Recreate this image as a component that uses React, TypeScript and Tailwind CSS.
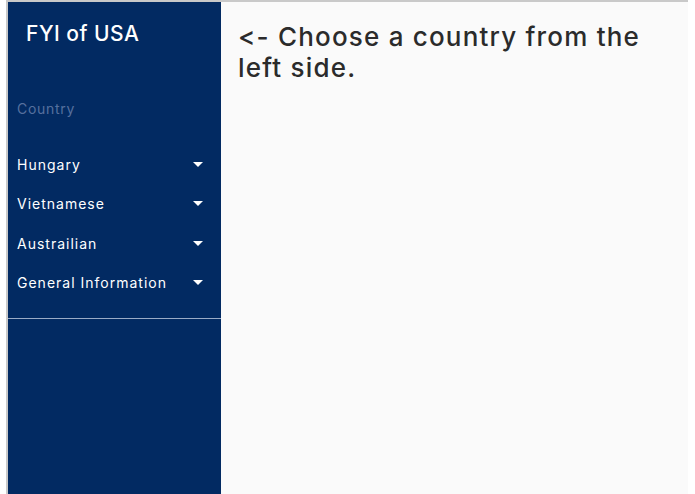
const countries = ['Hungary', 'Vietnamese', 'Austrailian', 'General Information'];

const Caret = () => (
  <svg width="10" height="5" viewBox="0 0 10 5" className="shrink-0">
    <path d="M0 0 L10 0 L5 5 Z" fill="#ffffff" />
  </svg>
);

const App = () => {
  return (
    <div
      className="w-[695px] h-[494px] bg-white pl-[6px] pr-[7px] overflow-hidden [font-feature-settings:'calt'_0,'liga'_0]"
      style={{ fontFamily: 'Inter, "Open Sans", sans-serif' }}
    >
      <div className="flex h-full border-t-2 border-l-2 border-[#c9c9c9]">
        <aside className="w-[213px] shrink-0 bg-[#022a62] flex flex-col">
          <h1 className="pl-[18px] pt-[18px] text-[21px] leading-[28px] font-medium tracking-[0.5px] text-white">
            FYI of USA
          </h1>
          <p className="pl-[9px] mt-[51px] text-[14px] leading-[20px] tracking-[0.7px] text-[#56709e]">
            Country
          </p>
          <ul className="mt-[26px] pb-[16px] border-b border-[#9aabc6]">
            {countries.map((name) => (
              <li
                key={name}
                className="flex items-center justify-between h-[39.3px] pl-[9px] pr-[18px] text-[14px] tracking-[1px] text-white"
              >
                <span>{name}</span>
                <Caret />
              </li>
            ))}
          </ul>
        </aside>
        <main className="flex-1 bg-[#fafafa] pl-[17px] pt-[19px] pr-[20px]">
          <h2 className="text-[26px] leading-[31px] font-medium tracking-[1.2px] text-[#2b2b2b]">
            &lt;- Choose a country from the
            <br />
            left side.
          </h2>
        </main>
      </div>
    </div>
  );
};

export default App;
